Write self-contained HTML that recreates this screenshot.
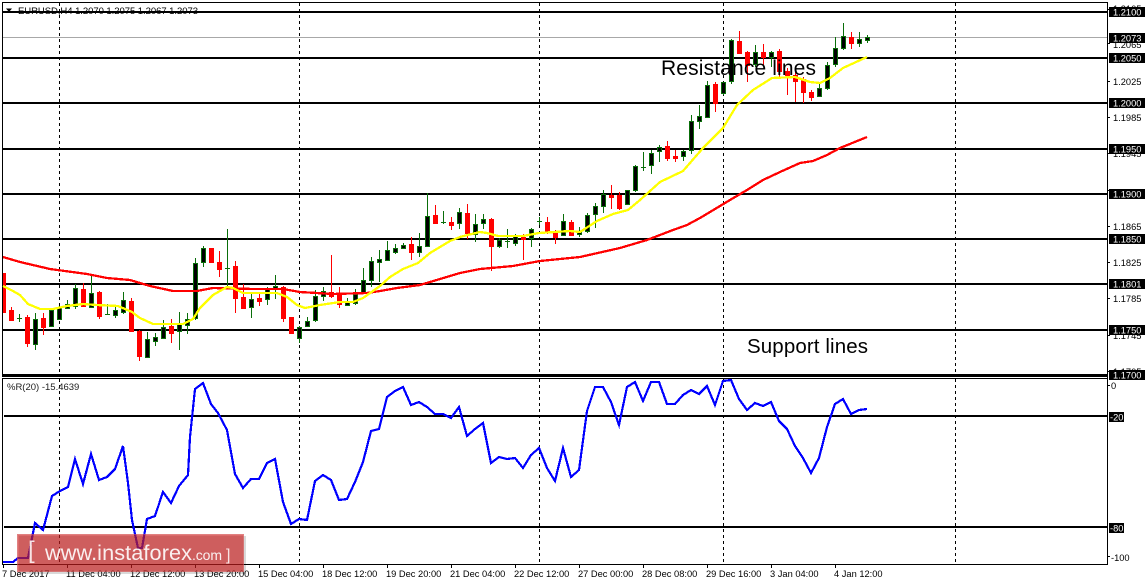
<!DOCTYPE html>
<html><head><meta charset="utf-8"><title>EURUSD H4</title>
<style>
html,body{margin:0;padding:0;background:#fff;width:1147px;height:585px;overflow:hidden}
svg{display:block}
text{font-family:"Liberation Sans",Arial,sans-serif;font-size:9.3px;fill:#000}
.b{fill:#fff}
</style></head><body>
<svg width="1147" height="585" viewBox="0 0 1147 585" xmlns="http://www.w3.org/2000/svg">
<rect width="1147" height="585" fill="#fff"/>
<!-- dashed verticals -->
<path shape-rendering="crispEdges" d="M59.5 3V375M299.5 3V375M539.5 3V375M723.5 3V375M955.5 3V375M59.5 379V564M299.5 379V564M539.5 379V564M723.5 379V564M955.5 379V564" stroke="#000" stroke-width="1" stroke-dasharray="3 3" fill="none"/>
<!-- current price -->
<path shape-rendering="crispEdges" d="M3 37.5H1107" stroke="#a8a8a8" stroke-width="1"/>
<!-- title -->
<path d="M6 8.5h6l-3 3.5z" fill="#000"/>
<text x="18" y="14" textLength="180" lengthAdjust="spacing" style="font-size:9.5px">EURUSD,H4  1.2070 1.2075 1.2067 1.2073</text>
<!-- horizontal lines -->
<path shape-rendering="crispEdges" stroke="#000" stroke-width="2" fill="none" d="M3 12H1107M3 58H1107M3 103H1107M3 149H1107M3 194H1107M3 239H1107M3 284H1107M3 330H1107M4 416H1107M4 527H1107"/>
<path shape-rendering="crispEdges" stroke="#000" stroke-width="3" fill="none" d="M3 375.5H1107"/>
<!-- frame -->
<path shape-rendering="crispEdges" stroke="#000" stroke-width="1" fill="none" d="M2.5 377V2.5H1107.5V564.5H2.5V378.5H1107"/>
<!-- green wicks -->
<path shape-rendering="crispEdges" fill="none" stroke="#0a6e0a" stroke-width="1" d="M19.5 314V322M17 318.5h5M35.5 313V350M51.5 310V326M59.5 306V320M67.5 300V309M75.5 284V309M91.5 275V307M107.5 304V315M105 314.5h5M115.5 307V318M123.5 292V314M147.5 332V358M155.5 333V346M163.5 320V338M179.5 312V350M187.5 313V334M195.5 258V320M203.5 246V267M227.5 229V287M225 268.5h5M251.5 294V318M267.5 287V305M275.5 275V299M299.5 326V343M307.5 317V327M315.5 290V322M323.5 287V301M347.5 298V306M355.5 289V305M363.5 268V293M371.5 257V287M379.5 250V282M387.5 241V260M395.5 244V254M403.5 243V249M419.5 233V257M427.5 193V247M443.5 211V224M441 222.5h5M459.5 208V229M475.5 214V242M483.5 214V229M499.5 238V248M507.5 229V248M505 241.5h5M515.5 234V246M531.5 228V247M539.5 217V225M537 221.5h5M563.5 214V235M579.5 227V237M587.5 213V233M595.5 203V228M603.5 190V213M627.5 190V205M635.5 165V192M643.5 152V171M641 167.5h5M651.5 150V174M659.5 145V162M683.5 150V161M691.5 115V154M699.5 105V129M707.5 81V117M723.5 82V95M731.5 39V84M755.5 45V67M771.5 51V67M819.5 83V96M827.5 62V90M835.5 37V67M843.5 23V50M859.5 32V47M867.5 35V43"/>
<!-- bull bodies -->
<path shape-rendering="crispEdges" fill="#000" stroke="#0a6e0a" stroke-width="1" d="M33.5 319.5h4V344.5h-4zM49.5 310.5h4V326.5h-4zM57.5 307.5h4V319.5h-4zM65.5 304.5h4V308.5h-4zM73.5 288.5h4V306.5h-4zM89.5 293.5h4V307.5h-4zM113.5 310.5h4V315.5h-4zM121.5 300.5h4V312.5h-4zM145.5 339.5h4V357.5h-4zM153.5 337.5h4V341.5h-4zM161.5 327.5h4V338.5h-4zM177.5 324.5h4V331.5h-4zM185.5 319.5h4V325.5h-4zM193.5 263.5h4V318.5h-4zM201.5 248.5h4V262.5h-4zM249.5 299.5h4V307.5h-4zM265.5 289.5h4V299.5h-4zM273.5 286.5h4V289.5h-4zM297.5 327.5h4V338.5h-4zM305.5 321.5h4V326.5h-4zM313.5 296.5h4V320.5h-4zM321.5 291.5h4V296.5h-4zM345.5 302.5h4V305.5h-4zM353.5 294.5h4V303.5h-4zM361.5 280.5h4V293.5h-4zM369.5 261.5h4V280.5h-4zM377.5 259.5h4V262.5h-4zM385.5 250.5h4V260.5h-4zM393.5 248.5h4V252.5h-4zM401.5 245.5h4V248.5h-4zM417.5 246.5h4V252.5h-4zM425.5 216.5h4V246.5h-4zM457.5 212.5h4V223.5h-4zM473.5 224.5h4V234.5h-4zM481.5 219.5h4V223.5h-4zM497.5 240.5h4V246.5h-4zM513.5 236.5h4V243.5h-4zM529.5 229.5h4V238.5h-4zM561.5 221.5h4V235.5h-4zM577.5 231.5h4V234.5h-4zM585.5 215.5h4V231.5h-4zM593.5 206.5h4V214.5h-4zM601.5 194.5h4V206.5h-4zM625.5 190.5h4V204.5h-4zM633.5 166.5h4V190.5h-4zM649.5 153.5h4V165.5h-4zM657.5 147.5h4V151.5h-4zM681.5 151.5h4V156.5h-4zM689.5 121.5h4V150.5h-4zM697.5 116.5h4V121.5h-4zM705.5 85.5h4V117.5h-4zM721.5 82.5h4V93.5h-4zM729.5 40.5h4V81.5h-4zM753.5 52.5h4V64.5h-4zM769.5 52.5h4V57.5h-4zM817.5 88.5h4V96.5h-4zM825.5 65.5h4V88.5h-4zM833.5 48.5h4V64.5h-4zM841.5 36.5h4V48.5h-4zM857.5 39.5h4V43.5h-4zM865.5 37.5h4V40.5h-4z"/>
<!-- red wicks -->
<path shape-rendering="crispEdges" fill="none" stroke="#f00" stroke-width="1" d="M11.5 307V321M27.5 315V347M43.5 313V335M83.5 283V307M99.5 291V319M131.5 298V332M139.5 330V361M171.5 319V343M211.5 248V263M219.5 251V277M235.5 261V313M243.5 284V309M259.5 294V306M283.5 286V322M331.5 255V298M339.5 287V308M411.5 237V260M435.5 205V224M451.5 217V230M467.5 204V239M491.5 218V271M523.5 234V260M547.5 217V234M555.5 230V244M571.5 220V235M611.5 185V209M619.5 192V210M667.5 141V161M675.5 150V162M715.5 82V112M739.5 31V54M747.5 51V82M763.5 44V65M779.5 49V77M787.5 68V95M795.5 70V102M803.5 77V103M811.5 90V101M851.5 32V49"/>
<!-- bear bodies -->
<path shape-rendering="crispEdges" fill="#f00" stroke="#f00" stroke-width="1" d="M3.5 273.5h2V312.5h-2zM9.5 310.5h4V320.5h-4zM25.5 317.5h4V343.5h-4zM41.5 318.5h4V327.5h-4zM81.5 289.5h4V306.5h-4zM97.5 292.5h4V316.5h-4zM129.5 301.5h4V331.5h-4zM137.5 331.5h4V356.5h-4zM169.5 326.5h4V333.5h-4zM209.5 248.5h4V262.5h-4zM217.5 262.5h4V269.5h-4zM233.5 266.5h4V298.5h-4zM241.5 297.5h4V308.5h-4zM257.5 298.5h4V301.5h-4zM281.5 287.5h4V318.5h-4zM289.5 317.5h4V333.5h-4zM329.5 292.5h4V296.5h-4zM337.5 294.5h4V304.5h-4zM409.5 244.5h4V252.5h-4zM433.5 215.5h4V223.5h-4zM449.5 222.5h4V225.5h-4zM465.5 213.5h4V233.5h-4zM489.5 219.5h4V246.5h-4zM521.5 237.5h4V239.5h-4zM545.5 222.5h4V231.5h-4zM553.5 231.5h4V237.5h-4zM569.5 222.5h4V235.5h-4zM609.5 195.5h4V197.5h-4zM617.5 195.5h4V208.5h-4zM665.5 146.5h4V158.5h-4zM673.5 156.5h4V158.5h-4zM713.5 84.5h4V103.5h-4zM737.5 41.5h4V53.5h-4zM745.5 52.5h4V65.5h-4zM761.5 52.5h4V57.5h-4zM777.5 51.5h4V71.5h-4zM785.5 71.5h4V75.5h-4zM793.5 75.5h4V81.5h-4zM801.5 79.5h4V92.5h-4zM809.5 92.5h4V97.5h-4zM849.5 37.5h4V43.5h-4z"/>
<!-- MAs -->
<polyline shape-rendering="crispEdges" fill="none" stroke="#f00" stroke-width="2.3" points="3,257 20,262 50,269 87,274 107,278 130,280 150,286 173,291 197,291 213,288 253,289 283,289 300,292 333,294 367,293 380,291 397,288 420,285 440,279 460,273 480,269 513,266 540,261 580,257 620,248 647,240 673,230 687,225 700,218 730,200 747,190 763,180 780,172 800,163 813,161 827,155 840,148 867,137"/>
<polyline shape-rendering="crispEdges" fill="none" stroke="#ff0" stroke-width="2.3" points="3,286 13,291 20,295 28,304 40,309 53,309 67,306 83,304 97,305 118,306 132,312 140,318 153,324 183,324 193,319 200,308 213,295 227,287 233,288 243,293 277,293 287,297 297,305 305,308 315,306 320,305 340,302 353,302 363,298 380,286 390,277 403,269 418,263 430,253 450,241 460,237 480,232 487,233 498,236 523,236 539,233 570,231 580,232 597,221 613,214 628,210 640,200 660,182 683,171 703,148 723,128 737,105 753,90 772,78 795,77 810,82 820,83 830,78 843,68 867,57"/>
<!-- WPR -->
<polyline shape-rendering="crispEdges" fill="none" stroke="#00f" stroke-width="2.2" points="3,562 13,562 18,558 28,558 35,523 43,530 52,496 60,491 68,487 75,459 83,484 91,454 99,480 107,477 115,469 123,446 128,483 132,520 138,548 142,548 147,519 155,516 163,492 171,503 179,486 188,475 190,437 195,389 203,383 211,404 218,413 227,430 235,474 243,488 251,479 259,479 267,463 275,459 283,502 291,524 299,519 307,520 315,481 323,475 331,480 339,500 347,499 355,482 363,462 371,431 379,429 387,397 395,391 403,387 411,405 419,402 427,407 435,414 443,414 451,418 459,407 467,436 475,429 483,423 491,463 499,457 507,459 515,458 523,468 531,455 539,448 547,468 555,481 563,448 571,477 579,470 587,411 595,387 603,387 611,402 619,425 627,387 635,382 643,401 651,382 659,382 667,404 675,404 683,395 691,390 699,394 707,386 715,405 723,381 731,380 739,399 747,410 755,403 763,406 771,402 779,421 787,429 795,446 803,458 811,473 819,458 827,427 835,404 843,399 851,414 859,410 867,409"/>
<!-- annotations -->
<text x="661" y="75" style="font-size:21px" textLength="155">Resistance lines</text>
<text x="747" y="353" style="font-size:20.5px" textLength="121">Support lines</text>
<text x="7" y="390" style="font-size:9.5px;fill:#222">%R(20) -15.4639</text>
<!-- axis ticks -->
<path shape-rendering="crispEdges" stroke="#000" stroke-width="1" fill="none" d="M1108 9.5h2M1108 43.5h2M1108 81.5h2M1108 117.5h2M1108 153.5h2M1108 190.5h2M1108 226.5h2M1108 262.5h2M1108 298.5h2M1108 335.5h2M1108 371.5h2M1108 385.5h2M1108 556.5h2M3.5 565v3M67.5 565v3M131.5 565v3M195.5 565v3M259.5 565v3M323.5 565v3M387.5 565v3M451.5 565v3M515.5 565v3M579.5 565v3M643.5 565v3M707.5 565v3M771.5 565v3M835.5 565v3"/>
<!-- right axis labels -->
<g>
<text x="1113" y="12">1.2105</text>
<text x="1113" y="48">1.2065</text>
<text x="1113" y="85">1.2025</text>
<text x="1113" y="121">1.1985</text>
<text x="1113" y="157">1.1945</text>
<text x="1113" y="198">1.1905</text>
<text x="1113" y="230">1.1865</text>
<text x="1113" y="266">1.1825</text>
<text x="1113" y="302">1.1785</text>
<text x="1113" y="339">1.1745</text>
<text x="1113" y="375">1.1705</text>
<text x="1111" y="389">0</text>
<text x="1111" y="561">-100</text>
</g>
<g shape-rendering="crispEdges" fill="#000">
<rect x="1109" y="7" width="36" height="10"/>
<rect x="1109" y="33" width="36" height="10"/>
<rect x="1109" y="53" width="36" height="10"/>
<rect x="1109" y="98" width="36" height="10"/>
<rect x="1109" y="144" width="36" height="10"/>
<rect x="1109" y="189" width="36" height="10"/>
<rect x="1109" y="234" width="36" height="10"/>
<rect x="1109" y="279" width="36" height="10"/>
<rect x="1109" y="325" width="36" height="10"/>
<rect x="1109" y="370" width="36" height="10"/>
<rect x="1109" y="412" width="15" height="10"/>
<rect x="1109" y="523" width="15" height="10"/>
</g>
<g>
<text class="b" x="1113" y="15.5">1.2100</text>
<text class="b" x="1113" y="41.5">1.2073</text>
<text class="b" x="1113" y="61.5">1.2050</text>
<text class="b" x="1113" y="106.5">1.2000</text>
<text class="b" x="1113" y="152.5">1.1950</text>
<text class="b" x="1113" y="197.5">1.1900</text>
<text class="b" x="1113" y="242.5">1.1850</text>
<text class="b" x="1113" y="287.5">1.1801</text>
<text class="b" x="1113" y="333.5">1.1750</text>
<text class="b" x="1113" y="378.5">1.1700</text>
<text class="b" x="1110" y="420.5">-20</text>
<text class="b" x="1110" y="531.5">-80</text>
</g>
<!-- time axis -->
<g>
<text x="2" y="577">7 Dec 2017</text>
<text x="66" y="577">11 Dec 04:00</text>
<text x="130" y="577">12 Dec 12:00</text>
<text x="194" y="577">13 Dec 20:00</text>
<text x="258" y="577">15 Dec 04:00</text>
<text x="322" y="577">18 Dec 12:00</text>
<text x="386" y="577">19 Dec 20:00</text>
<text x="450" y="577">21 Dec 04:00</text>
<text x="514" y="577">22 Dec 12:00</text>
<text x="578" y="577">27 Dec 00:00</text>
<text x="642" y="577">28 Dec 08:00</text>
<text x="706" y="577">29 Dec 16:00</text>
<text x="770" y="577">3 Jan 04:00</text>
<text x="834" y="577">4 Jan 12:00</text>
</g>
<!-- watermark -->
<rect x="19" y="536" width="227" height="38" fill="#000" opacity=".15"/>
<rect x="17" y="534" width="227" height="38" fill="#c81e1e" fill-opacity=".66"/>
<rect x="17.5" y="534.5" width="226" height="37" fill="none" stroke="#fff" stroke-opacity=".15"/>
<text x="28" y="558" style="font-size:24px;fill:#f8e4e4">[</text>
<text x="45" y="560" style="font-size:21.7px;fill:#fff;fill-opacity:.9" textLength="147">www.instaforex</text>
<text x="192" y="560" style="font-size:14px;fill:#fff;fill-opacity:.9" textLength="30">.com</text>
<text x="226" y="560" style="font-size:16px;fill:#f8e4e4">]</text>
</svg>
</body></html>
